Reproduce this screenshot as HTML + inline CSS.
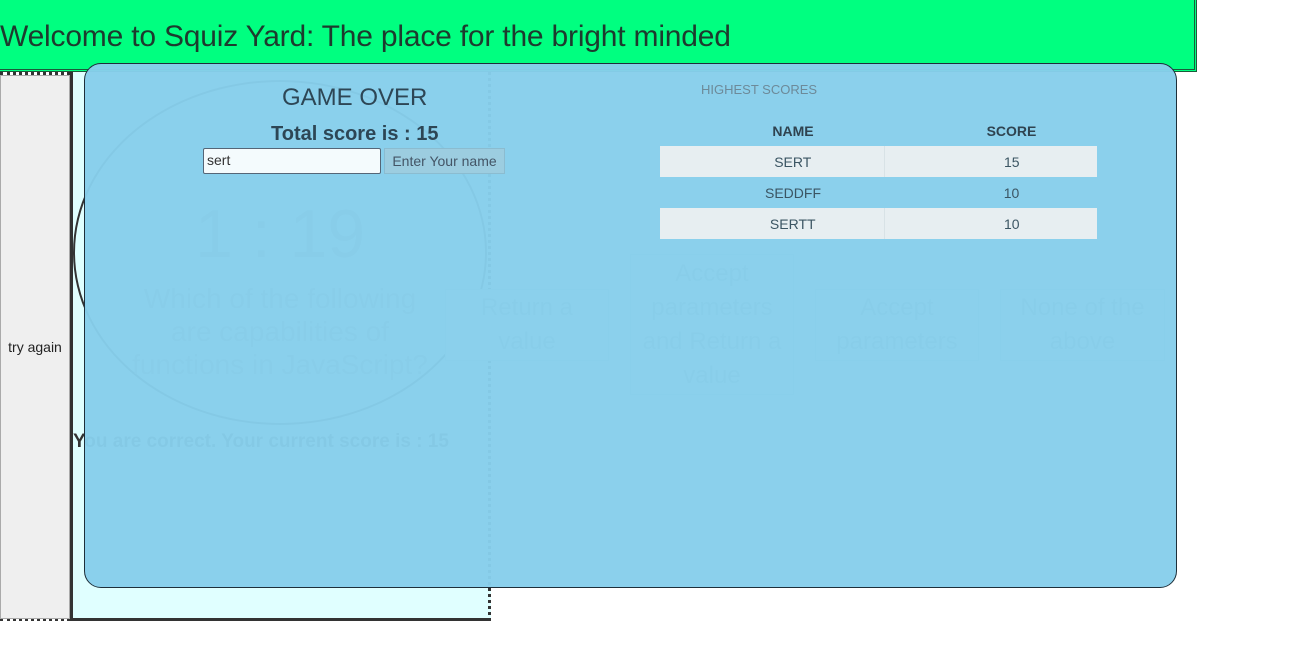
<!DOCTYPE html>
<html><head><meta charset="utf-8"><style>
*{box-sizing:border-box;margin:0;padding:0}
body{width:1313px;height:652px;background:#fff;font-family:"Liberation Sans",Arial,sans-serif;position:relative;overflow:hidden;color:#333}
.hdr{position:absolute;left:0;top:0;width:1197px;height:72px;background:#00ff80;border:3px double #1a5a3a;border-left:none;border-top:none}
.hdr h1{position:absolute;left:0;top:20px;font-weight:normal;font-size:30px;letter-spacing:-0.2px;color:#1d3b2e}
.topdots{position:absolute;left:0;top:72px;width:491px;height:3px;border-top:3px dotted #333}
.btn{position:absolute;left:0;top:75px;width:70px;height:544px;background:#efefef;border:1px solid #aaa;font-size:14px;display:flex;align-items:center;justify-content:center;color:#222}
.bottomdots{position:absolute;left:0;top:618px;width:491px;height:3px;border-top:3px dotted #333}
.cont{position:absolute;left:70px;top:72px;width:421px;height:549px;background:#e0ffff;border-left:3px solid #333;border-right:3px dotted #333;border-bottom:3px solid #333}
.circ{position:absolute;left:73px;top:80px;width:414px;height:345px;border:2px solid #333;border-radius:50%}
.timer{position:absolute;left:195px;top:195px;font-size:68px;color:#999;font-family:"Liberation Sans",sans-serif}
.q{position:absolute;left:95px;top:282px;width:370px;text-align:center;font-size:28px;line-height:33px;color:#999}
.ans{position:absolute;border:1px solid #bcd;background:#e8fff8;font-size:24px;line-height:34px;text-align:center;color:#aaa;display:flex;align-items:center;justify-content:center}
.corr{position:absolute;left:73px;top:431px;font-size:19px;font-weight:bold;color:#333}
.ov{position:absolute;left:84px;top:63px;width:1093px;height:525px;background:rgba(135,206,235,0.97);border:1px solid #1e2f3a;border-radius:17px}
.go{position:absolute;left:282px;top:84px;font-size:24px;color:#2d4655}
.ts{position:absolute;left:271px;top:123px;font-size:20px;font-weight:bold;color:#2d4655}
.inp{position:absolute;left:203px;top:148px;width:178px;height:26px;background:#f4fbfd;border:1px solid #567;border-radius:2px;font-size:14px;padding:3px 3px;color:#333}
.eb{position:absolute;left:384px;top:148px;width:121px;height:26px;background:#9ccde0;border:1px solid #8bbcd0;font-size:14px;color:#456;text-align:center;line-height:24px}
.hs{position:absolute;left:701px;top:82px;font-size:13px;color:#6d8a99}
table{position:absolute;left:660px;top:116px;width:437px;border-collapse:collapse;font-size:14px;color:#3b5563}
th{height:30px;font-weight:bold;color:#2f4350;padding-left:42px}
td{height:31px;text-align:center;padding-left:42px}
td:first-child,th:first-child{width:224px}
tr.s td{background:#e7eef1}
tr.s td:first-child{border-right:1px solid #d8e2e6}
</style></head><body>
<div class="hdr"><h1>Welcome to Squiz Yard: The place for the bright minded</h1></div>
<div class="topdots"></div>
<div class="cont"></div>
<div class="bottomdots"></div>
<div class="btn">try again</div>
<div class="circ"></div>
<div class="timer">1 : 19</div>
<div class="q">Which of the following<br>are capabilities of<br>functions in JavaScript?</div>
<div class="ans" style="left:445px;top:289px;width:164px;height:72px">Return a<br>value</div>
<div class="ans" style="left:630px;top:254px;width:164px;height:141px">Accept<br>parameters<br>and Return a<br>value</div>
<div class="ans" style="left:815px;top:289px;width:164px;height:72px">Accept<br>parameters</div>
<div class="ans" style="left:1000px;top:289px;width:165px;height:72px">None of the<br>above</div>
<div class="corr">You are correct. Your current score is : 15</div>
<div class="ov"></div>
<div class="go">GAME OVER</div>
<div class="ts">Total score is : 15</div>
<div class="inp">sert</div>
<div class="eb">Enter Your name</div>
<div class="hs">HIGHEST SCORES</div>
<table>
<tr><th>NAME</th><th>SCORE</th></tr>
<tr class="s"><td>SERT</td><td>15</td></tr>
<tr><td>SEDDFF</td><td>10</td></tr>
<tr class="s"><td>SERTT</td><td>10</td></tr>
</table>
</body></html>
